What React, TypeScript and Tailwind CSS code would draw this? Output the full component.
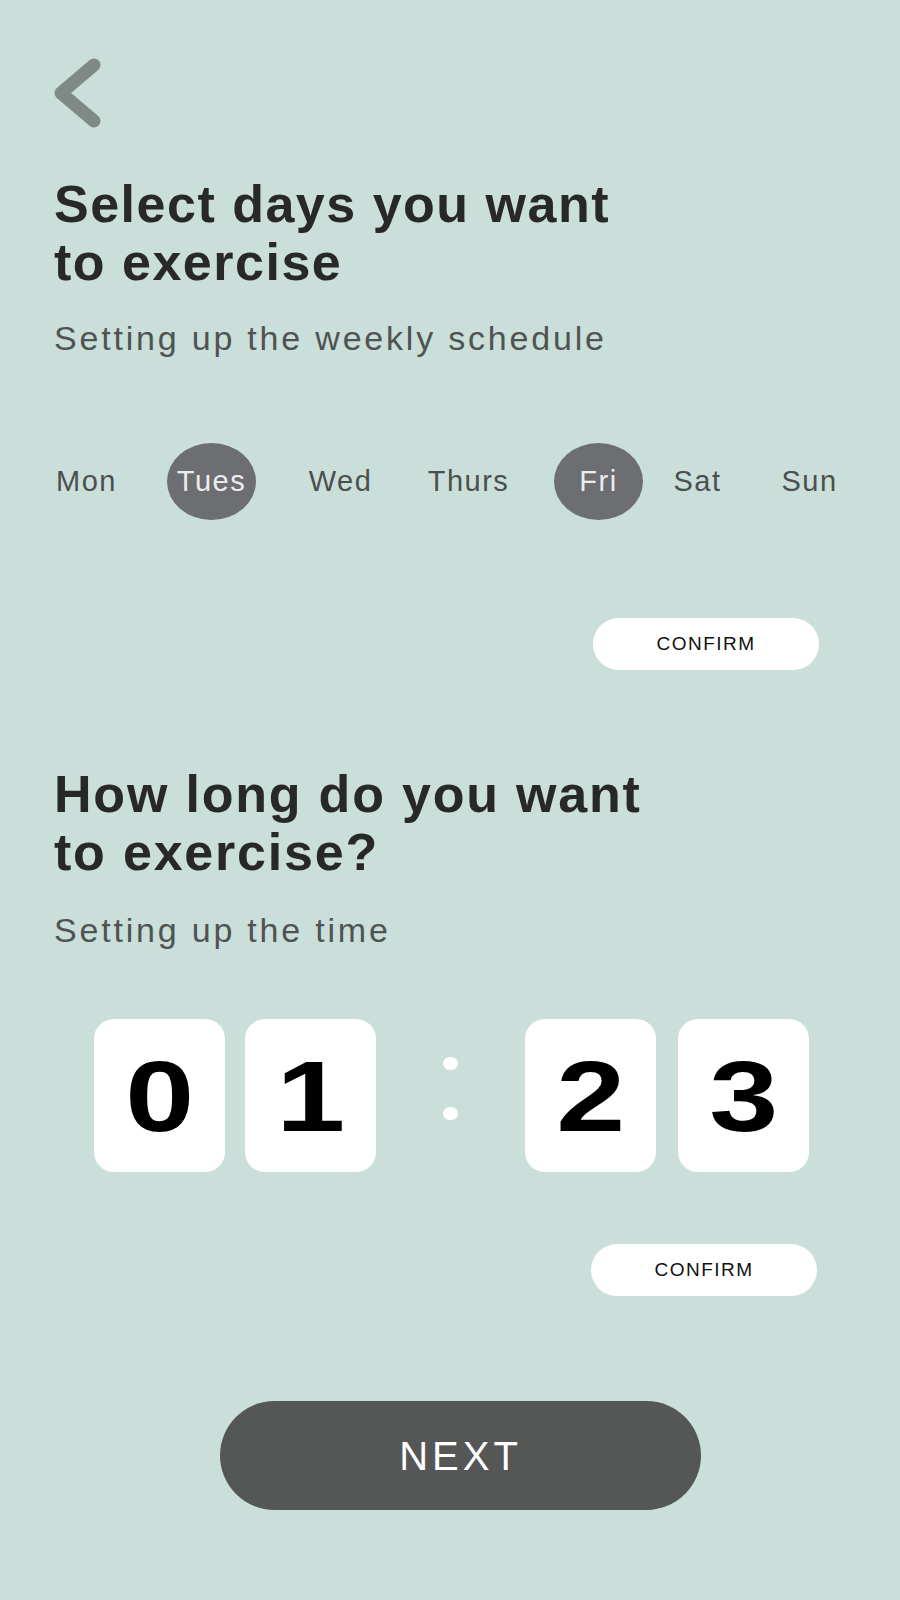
import React from 'react'

interface Day {
  label: string;
  selected: boolean;
  spacing: string;
}

const days: Day[] = [
  { label: 'Mon', selected: false, spacing: 'ml-[-12px]' },
  { label: 'Tues', selected: true, spacing: 'ml-[36px]' },
  { label: 'Wed', selected: false, spacing: 'ml-[40px]' },
  { label: 'Thurs', selected: false, spacing: 'ml-[39px]' },
  { label: 'Fri', selected: true, spacing: 'ml-[41px]' },
  { label: 'Sat', selected: false, spacing: 'ml-[10px]' },
  { label: 'Sun', selected: false, spacing: 'ml-[23px]' },
]

const font = { fontFamily: '"Liberation Sans", Arial, sans-serif' }

const BackIcon = () => (
  <svg width="50" height="70" viewBox="0 0 50 70" fill="none">
    <polyline
      points="42,7 9,35 42,63"
      stroke="#7f8985"
      strokeWidth="13"
      strokeLinecap="round"
      strokeLinejoin="round"
    />
  </svg>
)

const ConfirmButton = ({ className }: { className?: string }) => (
  <button
    className={`self-end w-[226px] h-[52px] rounded-full bg-white text-[19px] tracking-[1.5px] text-[#111] ${className ?? ''}`}
  >
    CONFIRM
  </button>
)

const Digit = ({ value }: { value: string }) => (
  <div className="w-[131px] h-[153px] rounded-[20px] bg-white flex items-center justify-center">
    <span className="text-[100px] leading-none font-bold text-black scale-x-[1.24] inline-block">{value}</span>
  </div>
)

const App: React.FC = () => {
  return (
    <div className="min-h-[1600px] w-[900px] bg-[#cadfda] pl-[54px] pr-[81px] pt-[58px] flex flex-col" style={font}>
      <button className="w-[50px] h-[70px] ml-[-2px]">
        <BackIcon />
      </button>

      {/* Days */}
      <h1 className="mt-[47px] text-[52px] leading-[58px] font-bold tracking-[1.5px] text-[#282828]">
        Select days you want
        <br />
        to exercise
      </h1>
      <p className="mt-[27px] text-[34px] leading-[40px] tracking-[2.8px] text-[#4f5352]">
        Setting up the weekly schedule
      </p>

      <div className="mt-[85px] flex items-center">
        {days.map((d) => (
          <div
            key={d.label}
            className={`w-[89px] h-[77px] shrink-0 flex items-center justify-center rounded-[50%] text-[29px] tracking-[1.5px] ${d.spacing} ${
              d.selected ? 'bg-[#6d6e72] text-[#ececec]' : 'text-[#4b4f4e]'
            }`}
          >
            {d.label}
          </div>
        ))}
      </div>

      <ConfirmButton className="mt-[98px]" />

      {/* Time */}
      <h2 className="mt-[95px] text-[52px] leading-[58px] font-bold tracking-[1.8px] text-[#282828]">
        How long do you want
        <br />
        to exercise?
      </h2>
      <p className="mt-[29px] text-[34px] leading-[40px] tracking-[2.8px] text-[#4f5352]">
        Setting up the time
      </p>

      <div className="mt-[69px] ml-[40px] flex items-center">
        <div className="flex gap-[20px]">
          <Digit value="0" />
          <Digit value="1" />
        </div>
        <div className="w-[149px] pb-[14px] flex flex-col items-center gap-[37px]">
          <span className="w-[15px] h-[13px] rounded-full bg-white" />
          <span className="w-[15px] h-[13px] rounded-full bg-white" />
        </div>
        <div className="flex gap-[22px]">
          <Digit value="2" />
          <Digit value="3" />
        </div>
      </div>

      <ConfirmButton className="mt-[72px] mr-[2px]" />

      <button className="mt-[105px] ml-[166px] w-[481px] h-[109px] rounded-full bg-[#555756] text-white text-[40px] tracking-[4px]">
        NEXT
      </button>
    </div>
  )
}

export default App
